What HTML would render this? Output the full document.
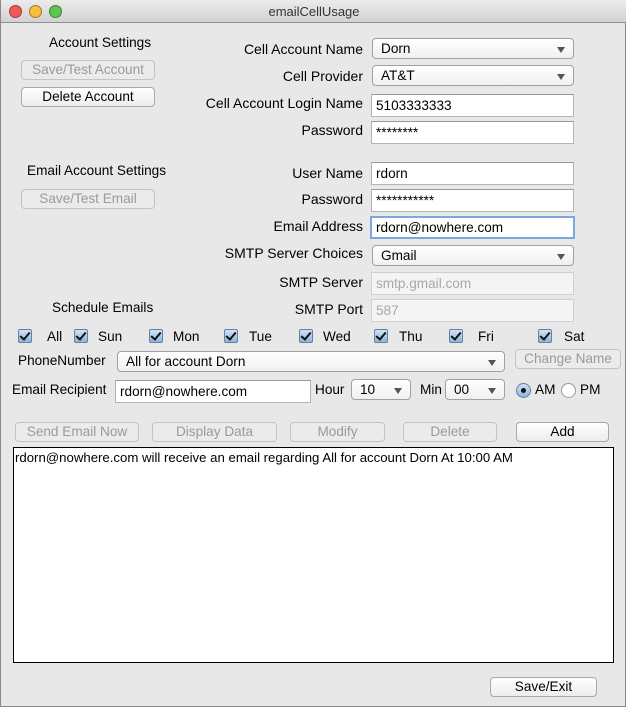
<!DOCTYPE html><html><head><style>
*{box-sizing:border-box;margin:0;padding:0}
body{width:626px;height:707px;background:#e8e8e8;font-family:"Liberation Sans",sans-serif;font-size:13.6px;color:#000;position:relative;overflow:hidden;border-left:1px solid #8a8a8a;border-right:1px solid #8a8a8a;border-bottom:1px solid #8a8a8a}
.a{position:absolute;white-space:nowrap}
.title{left:0;top:0;width:626px;height:23px;background:linear-gradient(#ececec,#d2d2d2);border-bottom:1px solid #8f8f8f;text-align:center;line-height:23px;color:#333;font-size:13px}
.dot{position:absolute;top:5px;width:13px;height:13px;border-radius:50%;border:1px solid rgba(0,0,0,.35)}
.lbl{text-align:right;line-height:16px;font-size:14px}
.btn{height:20px;border:1px solid #a8a8a8;border-radius:4px;background:linear-gradient(#fff,#ededed);text-align:center;line-height:18px}
.dis{color:#9a9a9a;border-color:#c4c4c4;background:#ebebeb}
.cb{height:21px;border:1px solid #a0a0a0;border-radius:4px;background:linear-gradient(#fff,#f0f0f0);line-height:19px;padding-left:8px}
.cb:after{content:"";position:absolute;right:8px;top:8px;border-left:4px solid transparent;border-right:4px solid transparent;border-top:6px solid #555}
.tf{height:23px;border:1px solid #b4b4b4;border-top-color:#999;background:#fff;line-height:21px;padding-left:4px}
.tfd{color:#a8a8a8;border-color:#d0d0d0;background:#f4f4f4}
.ck{width:14px;height:14px;border:1px solid #6c7f99;border-radius:2px;background:linear-gradient(#cfe3f8,#8bb4e0)}
.ck:after{content:"";position:absolute;left:3px;top:0px;width:4px;height:8px;border:solid #111;border-width:0 2px 2px 0;transform:rotate(40deg)}
</style></head><body>
<div class="a title">emailCellUsage
<span class="dot" style="left:8px;background:#f25b55"></span><span class="dot" style="left:28px;background:#f6be3b"></span><span class="dot" style="left:48px;background:#60c553"></span></div>

<div class="a" style="left:48px;top:35px">Account Settings</div>
<div class="a btn dis" style="left:20px;top:60px;width:134px">Save/Test Account</div>
<div class="a btn" style="left:20px;top:87px;width:134px">Delete Account</div>

<div class="a lbl" style="right:262px;top:41px">Cell Account Name</div>
<div class="a lbl" style="right:262px;top:68px">Cell Provider</div>
<div class="a lbl" style="right:262px;top:95px">Cell Account Login Name</div>
<div class="a lbl" style="right:262px;top:122px">Password</div>
<div class="a cb" style="left:371px;top:38px;width:202px">Dorn</div>
<div class="a cb" style="left:371px;top:65px;width:202px">AT&amp;T</div>
<div class="a tf" style="left:370px;top:94px;width:203px">5103333333</div>
<div class="a tf" style="left:370px;top:121px;width:203px">********</div>

<div class="a" style="left:26px;top:163px">Email Account Settings</div>
<div class="a btn dis" style="left:20px;top:189px;width:134px">Save/Test Email</div>

<div class="a lbl" style="right:262px;top:165px">User Name</div>
<div class="a lbl" style="right:262px;top:191px">Password</div>
<div class="a lbl" style="right:262px;top:218px">Email Address</div>
<div class="a lbl" style="right:262px;top:245px">SMTP Server Choices</div>
<div class="a lbl" style="right:262px;top:274px">SMTP Server</div>
<div class="a lbl" style="right:262px;top:301px">SMTP Port</div>
<div class="a tf" style="left:370px;top:162px;width:203px">rdorn</div>
<div class="a tf" style="left:370px;top:189px;width:203px">***********</div>
<div class="a tf" style="left:369px;top:216px;width:205px;border:2px solid #7aa7dc;line-height:19px;padding-left:4px">rdorn@nowhere.com</div>
<div class="a cb" style="left:371px;top:245px;width:202px">Gmail</div>
<div class="a tf tfd" style="left:370px;top:272px;width:203px">smtp.gmail.com</div>
<div class="a tf tfd" style="left:370px;top:299px;width:203px">587</div>
<div class="a" style="left:51px;top:300px">Schedule Emails</div>

<div class="a ck" style="left:17px;top:329px"></div><div class="a" style="left:46px;top:329px">All</div>
<div class="a ck" style="left:73px;top:329px"></div><div class="a" style="left:97px;top:329px">Sun</div>
<div class="a ck" style="left:148px;top:329px"></div><div class="a" style="left:172px;top:329px">Mon</div>
<div class="a ck" style="left:223px;top:329px"></div><div class="a" style="left:248px;top:329px">Tue</div>
<div class="a ck" style="left:298px;top:329px"></div><div class="a" style="left:322px;top:329px">Wed</div>
<div class="a ck" style="left:373px;top:329px"></div><div class="a" style="left:398px;top:329px">Thu</div>
<div class="a ck" style="left:448px;top:329px"></div><div class="a" style="left:477px;top:329px">Fri</div>
<div class="a ck" style="left:537px;top:329px"></div><div class="a" style="left:563px;top:329px">Sat</div>

<div class="a" style="left:17px;top:353px">PhoneNumber</div>
<div class="a cb" style="left:116px;top:351px;width:388px">All for account Dorn</div>
<div class="a btn dis" style="left:514px;top:349px;width:106px">Change Name</div>

<div class="a" style="left:11px;top:382px">Email Recipient</div>
<div class="a tf" style="left:114px;top:380px;width:196px">rdorn@nowhere.com</div>
<div class="a" style="left:314px;top:382px">Hour</div>
<div class="a cb" style="left:350px;top:379px;width:60px">10</div>
<div class="a" style="left:419px;top:382px">Min</div>
<div class="a cb" style="left:444px;top:379px;width:60px">00</div>
<div class="a" style="left:515px;top:383px;width:15px;height:15px;border-radius:50%;border:1px solid #6c7f99;background:linear-gradient(#cfe3f8,#8bb4e0)"><span style="position:absolute;left:4px;top:4px;width:5px;height:5px;border-radius:50%;background:#111"></span></div>
<div class="a" style="left:534px;top:382px">AM</div>
<div class="a" style="left:560px;top:383px;width:15px;height:15px;border-radius:50%;border:1px solid #999;background:#fff"></div>
<div class="a" style="left:579px;top:382px">PM</div>

<div class="a btn dis" style="left:14px;top:422px;width:124px">Send Email Now</div>
<div class="a btn dis" style="left:151px;top:422px;width:125px">Display Data</div>
<div class="a btn dis" style="left:289px;top:422px;width:95px">Modify</div>
<div class="a btn dis" style="left:402px;top:422px;width:94px">Delete</div>
<div class="a btn" style="left:515px;top:422px;width:93px">Add</div>

<div class="a" style="left:12px;top:447px;width:601px;height:216px;background:#fff;border:1px solid #000;padding:2px 1px;line-height:15px;font-size:13.2px">rdorn@nowhere.com will receive an email regarding All for account Dorn At 10:00 AM</div>

<div class="a btn" style="left:489px;top:677px;width:107px">Save/Exit</div>
</body></html>
